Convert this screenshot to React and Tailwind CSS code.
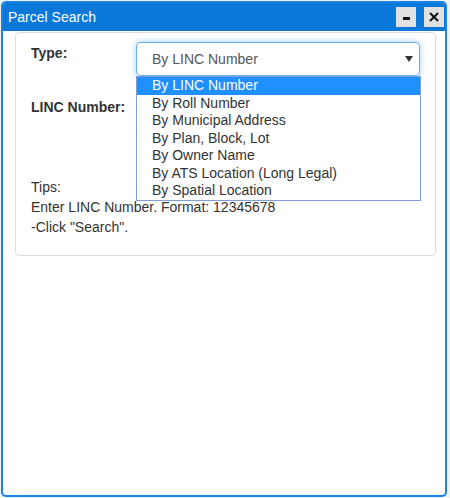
import React from "react";

const options = [
  "By LINC Number",
  "By Roll Number",
  "By Municipal Address",
  "By Plan, Block, Lot",
  "By Owner Name",
  "By ATS Location (Long Legal)",
  "By Spatial Location",
];

export default function App() {
  return (
    <div className="w-[450px] h-[498px] bg-[#eef0f2] pt-px pl-px font-['Liberation_Sans',Arial,sans-serif] text-[14px] text-[#333]">
      <div className="w-[446px] h-[496px] flex flex-col rounded-[5px] border-2 border-[#1683e6] bg-white overflow-hidden">
        {/* Title bar */}
        <div className="h-[28px] shrink-0 bg-[#0a78d8] flex items-center justify-between pl-[5px] pr-px">
          <span className="text-white text-[14px] leading-none">Parcel Search</span>
          <div className="flex gap-[8px]">
            <button className="w-[20px] h-[20px] bg-[#e1e1e1] flex items-center justify-center">
              <span className="block w-[7px] h-[3px] bg-[#111] mt-[3px]" />
            </button>
            <button className="w-[20px] h-[20px] bg-[#e1e1e1] flex items-center justify-center">
              <svg width="10" height="10" viewBox="0 0 10 10">
                <path d="M1 1 L9 9 M9 1 L1 9" stroke="#111" strokeWidth="2" />
              </svg>
            </button>
          </div>
        </div>

        {/* Body */}
        <div className="flex-1 pl-[12px] pr-[9px] pt-px">
          <div className="w-[421px] h-[224px] rounded-[4px] border border-[#dddddd] pl-[15px] pr-[15px] pt-[9px]">
            {/* Type row */}
            <div className="flex">
              <div className="w-[105px] shrink-0 pt-px font-bold leading-[20px]">Type:</div>
              <div className="relative w-[284px]">
                <div className="h-[34px] rounded-[4px] border border-[#66afe9] shadow-[0_0_6px_rgba(102,175,233,0.6)] flex items-center justify-between pl-[15px] pr-[6px] text-[#555]">
                  <span>By LINC Number</span>
                  <svg width="8" height="6" viewBox="0 0 8 6">
                    <path d="M0 0 H8 L4 6 Z" fill="#333" />
                  </svg>
                </div>
                <div className="absolute left-0 top-[34px] w-[285px] h-[125px] border border-[#7f9fd6] bg-white z-10">
                  {options.map((o, i) => (
                    <div
                      key={o}
                      className={
                        "h-[17.57px] leading-[17.57px] pl-[15px] whitespace-nowrap " +
                        (i === 0 ? "bg-[#1e90ff] text-white" : "text-[#333]")
                      }
                    >
                      {o}
                    </div>
                  ))}
                </div>
              </div>
            </div>

            {/* LINC Number row */}
            <div className="flex mt-[21px]">
              <div className="w-[105px] shrink-0 font-bold leading-[20px]">LINC Number:</div>
              <div className="w-[284px] h-[34px] rounded-[4px] border border-[#cccccc]" />
            </div>

            {/* Tips */}
            <div className="mt-[46px] leading-[20px]">
              <div>Tips:</div>
              <div>Enter LINC Number. Format: 12345678</div>
              <div>-Click "Search".</div>
            </div>
          </div>
        </div>
      </div>
    </div>
  );
}
